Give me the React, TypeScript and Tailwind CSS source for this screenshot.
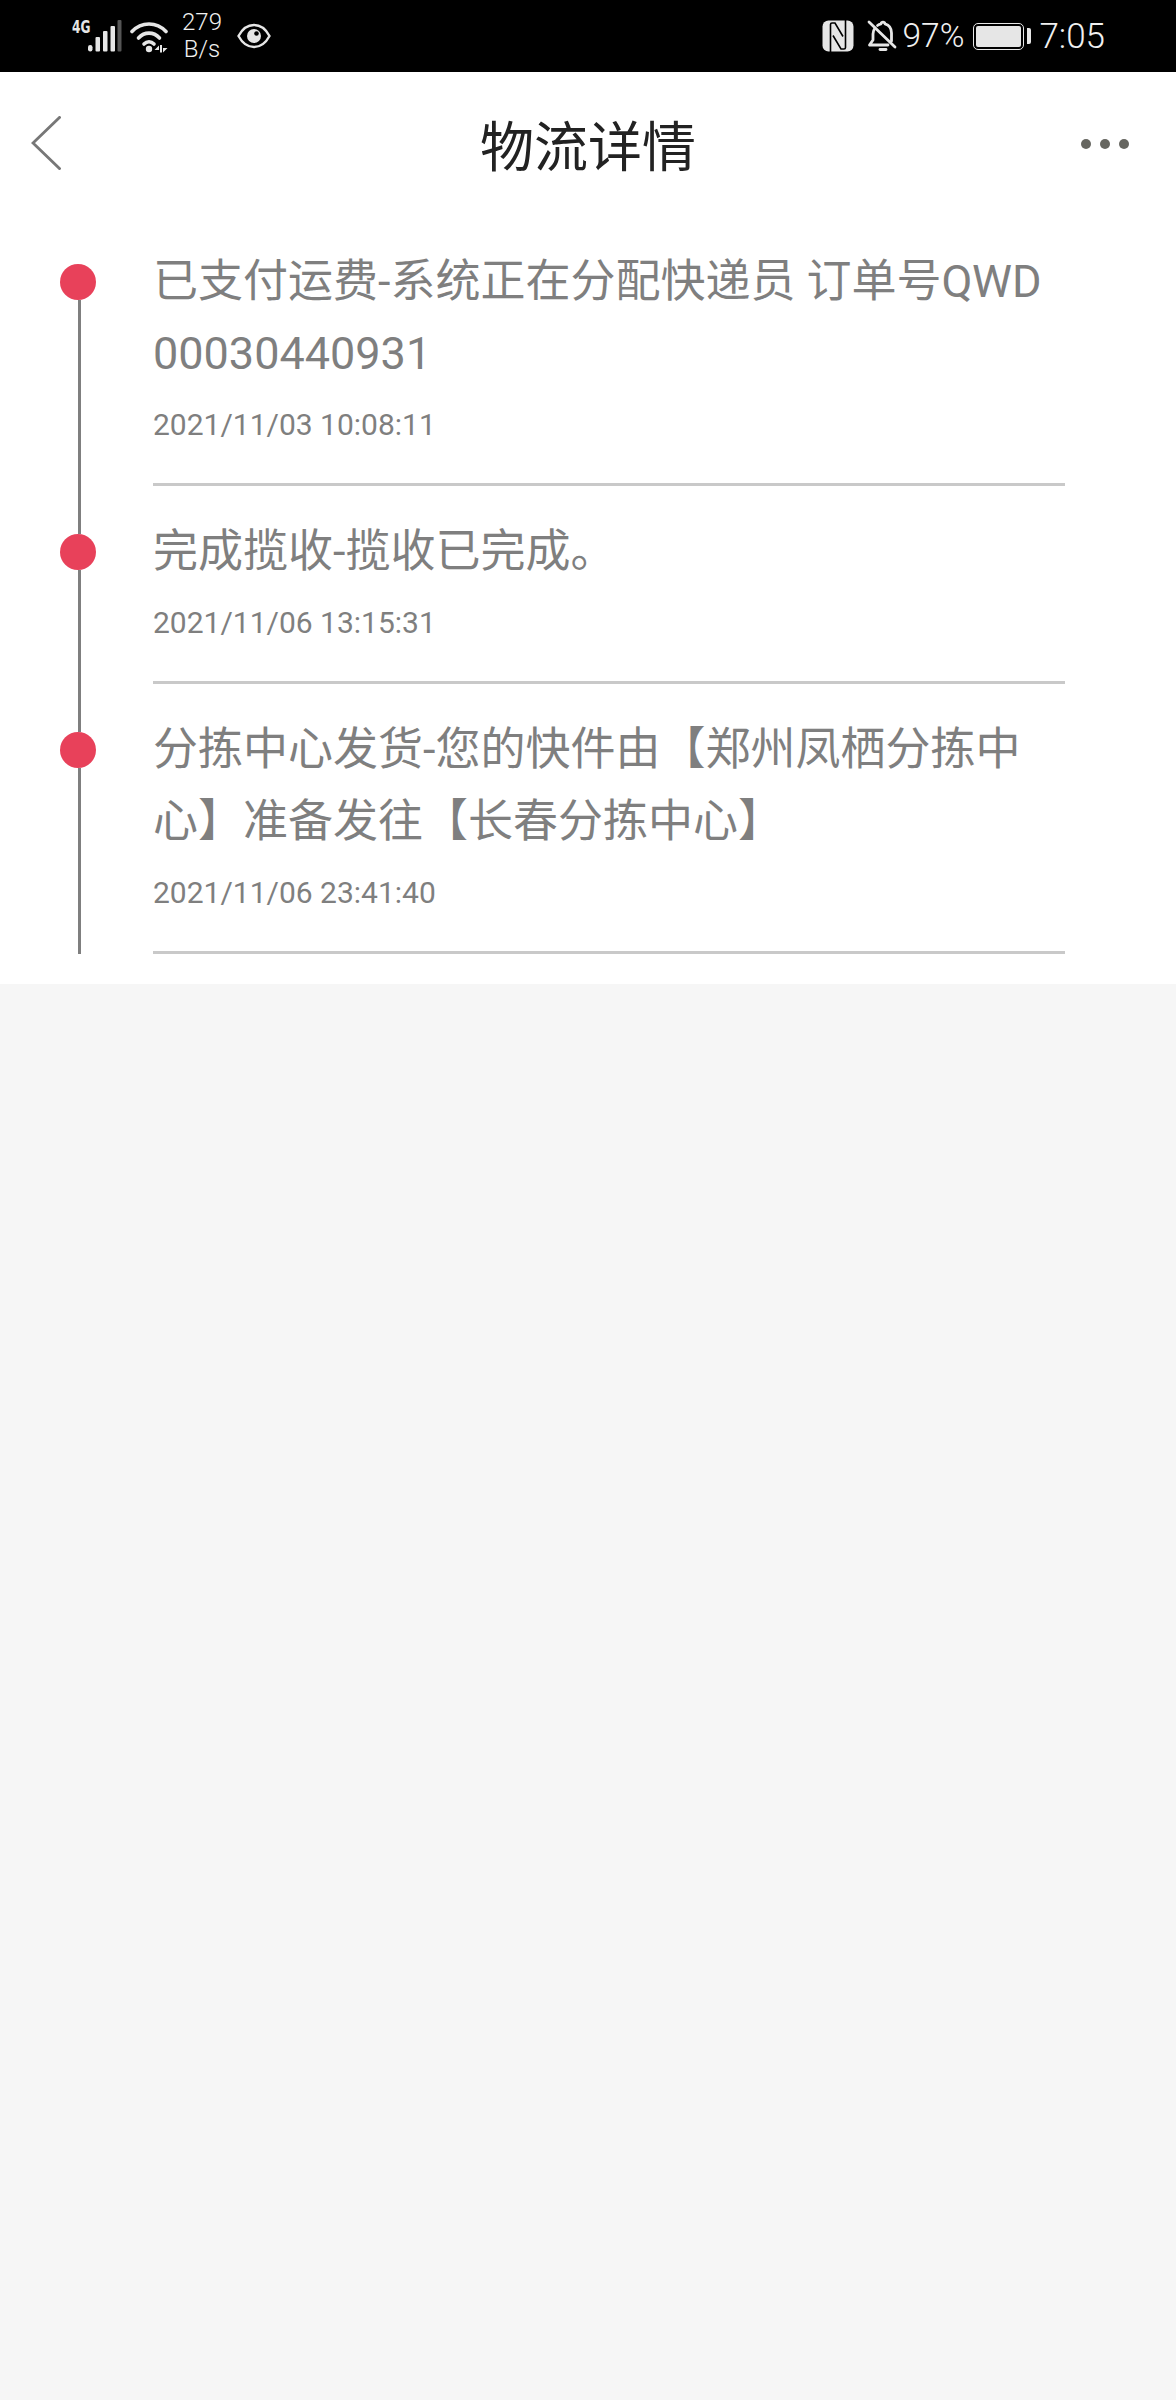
const cjk = "font-['Roboto','Noto_Sans_CJK_SC',sans-serif]";

function Signal() {
  return (
    <div className="h-[32px] relative w-[51px]">
      <span className="absolute left-[1px] top-[-2px] text-[18px] leading-[18px] font-bold text-[#e6e6e6] font-['DejaVu_Sans_Condensed','DejaVu_Sans',sans-serif] scale-x-[0.75] origin-left">4G</span>
      <svg className="absolute left-0 top-0" width="51" height="32" viewBox="0 0 51 32" fill="#e6e6e6">
        <rect x="17" y="25" width="4.5" height="6.5" rx="2.2" />
        <rect x="24.5" y="17" width="4.5" height="14.5" rx="1" />
        <rect x="32" y="11" width="4.5" height="20.5" rx="1" />
        <rect x="39.5" y="6" width="4.5" height="25.5" rx="1" />
        <rect x="46.5" y="0" width="4" height="31.5" rx="1" fill="#555" />
      </svg>
    </div>
  );
}

function Wifi() {
  return (
    <svg width="38" height="32" viewBox="0 0 38 32" fill="none" stroke="#e6e6e6" strokeWidth="3.6" strokeLinecap="round">
      <path d="M2 10.5C11.5 0.5 26.5 0.5 36 10.5" />
      <path d="M8.5 17C14.5 10.5 23.5 10.5 29.5 17" />
      <path d="M14 23C17 20 21 20 24 23" />
      <circle cx="19" cy="28" r="3.2" fill="#e6e6e6" stroke="none" />
      <path d="M29 24.5L24.5 29H29V24.5Z M33 31.5L37.5 27H33V31.5Z" fill="#e6e6e6" stroke="none" />
      <rect x="30" y="24" width="2" height="7.5" fill="#e6e6e6" stroke="none" />
    </svg>
  );
}

function Eye() {
  return (
    <svg width="34" height="26" viewBox="0 0 34 26" fill="none">
      <path d="M1.5 13C5.5 5.5 11 2 17 2S28.5 5.5 32.5 13C28.5 20.5 23 24 17 24S5.5 20.5 1.5 13Z" stroke="#e6e6e6" strokeWidth="2.4" />
      <circle cx="17" cy="13" r="7" fill="#e6e6e6" />
      <circle cx="19.5" cy="10.5" r="2.3" fill="#000" />
    </svg>
  );
}

function Nfc() {
  return (
    <svg width="32" height="32" viewBox="0 0 32 32" fill="none">
      <rect x="0.5" y="0.5" width="31" height="31" rx="6" fill="#e6e6e6" />
      <path d="M8.5 32V4.5C8.5 3.5 9 3 10 3H13L21 16.5" stroke="#000" strokeWidth="1.6" />
      <path d="M23.5 0V27.5C23.5 28.5 23 29 22 29H19L11 15.5" stroke="#000" strokeWidth="1.6" />
    </svg>
  );
}

function BellOff() {
  return (
    <svg width="30" height="32" viewBox="0 0 30 32" fill="none" stroke="#e6e6e6" strokeWidth="2.8" strokeLinecap="round" strokeLinejoin="round">
      <path d="M8 8C6.5 10 6 12 6 14V20L2.5 25H21" />
      <path d="M10.5 5.5C11.5 4.7 12.5 4.2 14 3.8C14.5 1.5 17.5 1.5 18 3.8C22 5 24.5 8.5 24.5 13V21" />
      <path d="M2 2L28 27" />
      <path d="M13 29.5H19" />
    </svg>
  );
}

function Battery() {
  return (
    <div className="flex items-center gap-[3px]">
      <div className="w-[51px] h-[27px] rounded-[5px] border-[1.5px] border-[#e6e6e6] p-[2px]">
        <div className="w-full h-full rounded-[2px] bg-[#e6e6e6]" />
      </div>
      <div className="w-[4px] h-[16px] rounded-r-[2px] bg-[#e6e6e6]" />
    </div>
  );
}

function StatusBar() {
  return (
    <div className="h-[72px] bg-black flex items-center justify-between pl-[71px] pr-[71px] font-['Roboto',sans-serif] text-[#f0f0f0]">
      <div className="flex items-center">
        <Signal />
        <div className="ml-[8px] mt-[2px]"><Wifi /></div>
        <div className="ml-[13px] w-[42px] flex flex-col items-center text-[24px] leading-[27px] font-light mt-[-1px]">
          <span>279</span>
          <span>B/s</span>
        </div>
        <div className="ml-[14px]"><Eye /></div>
      </div>
      <div className="flex items-center">
        <Nfc />
        <div className="ml-[13px]"><BellOff /></div>
        <span className="ml-[5px] text-[33.5px] leading-none font-light">97%</span>
        <div className="ml-[9px]"><Battery /></div>
        <span className="ml-[8px] text-[35px] leading-none font-light">7:05</span>
      </div>
    </div>
  );
}

function Header() {
  return (
    <div className="h-[143px] bg-white flex items-start justify-between relative">
      <svg className="mt-[44px] ml-[31px]" width="30" height="54" viewBox="0 0 30 54" fill="none" stroke="#777" strokeWidth="2.8">
        <path d="M29.5 0.5L2 27L29.5 53.5" />
      </svg>
      <h1 className={`absolute left-0 right-0 top-[43px] text-center text-[54px] leading-[68px] text-[#222] font-normal ${cjk}`}>物流详情</h1>
      <div className="mt-[67px] mr-[47px] flex gap-[9px]">
        <span className="w-[10px] h-[10px] rounded-full bg-[#666660]" />
        <span className="w-[10px] h-[10px] rounded-full bg-[#666660]" />
        <span className="w-[10px] h-[10px] rounded-full bg-[#666660]" />
      </div>
    </div>
  );
}

type Item = { text: string; date: string };

const items: Item[] = [
  { text: "已支付运费-系统正在分配快递员 订单号QWD00030440931", date: "2021/11/03 10:08:11" },
  { text: "完成揽收-揽收已完成。", date: "2021/11/06 13:15:31" },
  { text: "分拣中心发货-您的快件由【郑州凤栖分拣中心】准备发往【长春分拣中心】", date: "2021/11/06 23:41:40" },
];

function Row({ item, first }: { item: Item; first: boolean }) {
  return (
    <div className="flex">
      <div className="w-[93px] flex flex-col items-start">
        <div className={first ? "ml-[18px] w-[3px] h-[49px]" : "ml-[18px] w-[3px] h-[48px] bg-[#7f7f7f]"} />
        <div className="w-[36px] h-[36px] rounded-full bg-[#e8415a]" />
        <div className="ml-[18px] w-[3px] flex-1 bg-[#7f7f7f]" />
      </div>
      <div className={`w-[912px] border-b-[3px] border-[#c9c9c9] pb-[23px] ${first ? "pt-[31px]" : "pt-[30px]"} ${cjk}`}>
        <p className="text-[45px] leading-[72px] text-[#7f7f7f] break-all">{item.text}</p>
        <p className="text-[30px] leading-[70px] text-[#7f7f7f]">{item.date}</p>
      </div>
    </div>
  );
}

export default function App() {
  return (
    <div className="w-[1176px] h-[2400px] bg-[#f6f6f6]">
      <StatusBar />
      <Header />
      <div className="bg-white pl-[60px] pb-[30px]">
        {items.map((item, i) => (
          <Row key={item.date} item={item} first={i === 0} />
        ))}
      </div>
    </div>
  );
}
